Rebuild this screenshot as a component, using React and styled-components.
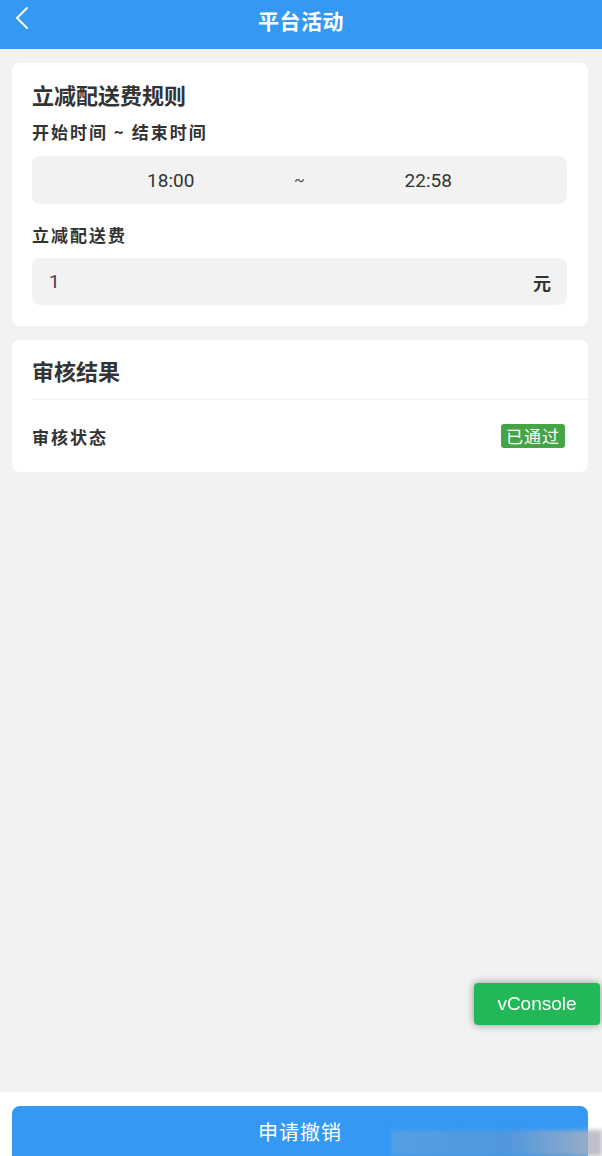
import React from "react";
import styled, { createGlobalStyle } from "styled-components";

const GlobalStyle = createGlobalStyle`
  html, body {
    margin: 0;
    padding: 0;
    background: #f2f2f2;
    font-family: Roboto, "Noto Sans CJK SC", sans-serif;
    color: #333;
  }
  * { box-sizing: border-box; }
`;

function App() {
  return (
    <Page>
      <GlobalStyle />
      <Header>
        <BackButton>
          <svg width="16" height="24" viewBox="0 0 16 24" fill="none">
            <polyline
              points="13,2 3,12 13,22"
              stroke="#fff"
              strokeWidth="2"
              strokeLinecap="round"
              strokeLinejoin="round"
            />
          </svg>
        </BackButton>
        <HeaderTitle>平台活动</HeaderTitle>
      </Header>

      <Content>
        <Card>
          <CardTitle>立减配送费规则</CardTitle>
          <FieldLabel>开始时间 ~ 结束时间</FieldLabel>
          <TimeBox>
            <TimeValue>18:00</TimeValue>
            <Tilde>~</Tilde>
            <TimeValue>22:58</TimeValue>
          </TimeBox>
          <FieldLabel $top={20}>立减配送费</FieldLabel>
          <AmountBox>
            <span>1</span>
            <Unit>元</Unit>
          </AmountBox>
        </Card>

        <ResultCard>
          <ResultTitle>审核结果</ResultTitle>
          <StatusRow>
            <StatusLabel>审核状态</StatusLabel>
            <Badge>已通过</Badge>
          </StatusRow>
        </ResultCard>
      </Content>

      <Footer>
        <SubmitButton>申请撤销</SubmitButton>
      </Footer>

      <VConsole>vConsole</VConsole>
      <Smudge />
    </Page>
  );
}

export default App;

const Page = styled.div`
  min-height: 100vh;
  display: flex;
  flex-direction: column;
  background: #f2f2f2;
  overflow: hidden;
`;

const Header = styled.div`
  position: relative;
  height: 49px;
  background: #3399f3;
  display: flex;
  align-items: center;
  justify-content: center;
`;

const BackButton = styled.div`
  position: absolute;
  left: 14px;
  top: 6px;
  width: 16px;
  height: 24px;
  display: flex;
`;

const HeaderTitle = styled.div`
  margin-top: -10px;
  font-family: "Noto Sans CJK SC", sans-serif;
  font-size: 21px;
  font-weight: 700;
  color: #fff;
  letter-spacing: 0.5px;
`;

const Content = styled.div`
  flex: 1;
  padding: 14px 14px 14px 12px;
  display: flex;
  flex-direction: column;
  gap: 14px;
`;

const Card = styled.div`
  background: #fff;
  border-radius: 7px;
  padding: 15px 21px 21px 20px;
`;

const CardTitle = styled.div`
  font-family: "Noto Sans CJK SC", sans-serif;
  font-size: 22px;
  font-weight: 700;
  line-height: 32px;
  color: #333;
`;

const FieldLabel = styled.div`
  margin-top: ${(p) => p.$top ?? 11}px;
  font-family: "Noto Sans CJK SC", sans-serif;
  font-size: 17px;
  font-weight: 700;
  line-height: 22px;
  letter-spacing: 2px;
  color: #333;
`;

const TimeBox = styled.div`
  margin-top: 13px;
  height: 48px;
  border-radius: 8px;
  background: #f2f2f2;
  display: grid;
  grid-template-columns: 1fr 40px 1fr;
  align-items: center;
  padding: 0 30px;
`;

const TimeValue = styled.div`
  text-align: center;
  font-size: 19px;
  color: #333;
`;

const Tilde = styled.div`
  text-align: center;
  font-size: 16px;
  color: #555;
`;

const AmountBox = styled.div`
  margin-top: 12px;
  height: 47px;
  border-radius: 8px;
  background: #f2f2f2;
  display: flex;
  align-items: center;
  justify-content: space-between;
  padding: 0 16px 0 17px;
  font-size: 19px;
  color: #444;
`;

const Unit = styled.span`
  font-family: "Noto Sans CJK SC", sans-serif;
  font-weight: 700;
  font-size: 18px;
  color: #333;
`;

const ResultCard = styled.div`
  background: #fff;
  border-radius: 7px;
  padding: 0 0 0 20px;
`;

const ResultTitle = styled.div`
  height: 60px;
  display: flex;
  align-items: center;
  border-bottom: 1px solid #f0f0f0;
  font-family: "Noto Sans CJK SC", sans-serif;
  font-size: 22px;
  font-weight: 700;
  color: #333;
`;

const StatusRow = styled.div`
  height: 72px;
  display: flex;
  align-items: center;
  justify-content: space-between;
  padding-right: 23px;
`;

const StatusLabel = styled.div`
  font-family: "Noto Sans CJK SC", sans-serif;
  font-size: 17px;
  font-weight: 700;
  letter-spacing: 2px;
  color: #333;
`;

const Badge = styled.div`
  height: 24px;
  padding: 0 5px;
  border-radius: 3px;
  background: #45a546;
  color: #fff;
  font-family: "Noto Sans CJK SC", sans-serif;
  font-size: 17px;
  letter-spacing: 1px;
  line-height: 24px;
`;

const Footer = styled.div`
  background: #fff;
  padding: 14px 14px 0 12px;
`;

const SubmitButton = styled.div`
  height: 50px;
  border-radius: 8px 8px 0 0;
  background: #3399f3;
  color: #fff;
  display: flex;
  align-items: center;
  justify-content: center;
  font-family: "Noto Sans CJK SC", sans-serif;
  font-size: 20px;
  letter-spacing: 1px;
`;

const VConsole = styled.div`
  position: fixed;
  right: 2px;
  bottom: 131px;
  width: 126px;
  height: 42px;
  border-radius: 4px;
  background: #22b857;
  color: #fff;
  display: flex;
  align-items: center;
  justify-content: center;
  font-family: "Liberation Sans", Arial, sans-serif;
  font-size: 19px;
  box-shadow: 0 0 8px rgba(0, 0, 0, 0.4);
`;

const Smudge = styled.div`
  position: fixed;
  right: 0;
  bottom: 0;
  width: 211px;
  height: 26px;
  background: linear-gradient(
    90deg,
    rgba(150, 170, 200, 0.35) 0%,
    rgba(110, 150, 200, 0.5) 55%,
    rgba(180, 180, 190, 0.85) 100%
  );
  filter: blur(2px);
`;
